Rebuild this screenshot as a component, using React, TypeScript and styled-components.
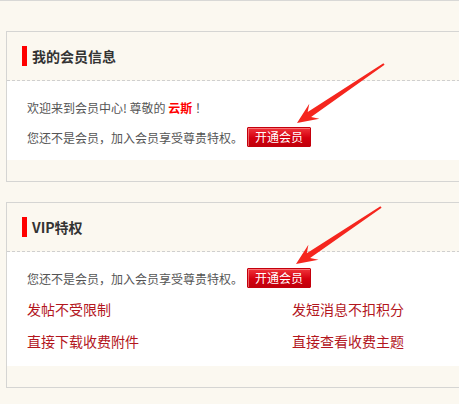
import React from 'react';
import styled, { createGlobalStyle } from 'styled-components';

const GlobalStyle = createGlobalStyle`
  html, body {
    margin: 0;
    padding: 0;
    background: #fbf8f0;
    overflow: hidden;
  }
  body {
    font-family: "Noto Sans CJK SC", "Noto Sans", sans-serif;
  }
`;

interface Point {
  x: number;
  y: number;
}

// builds a tapered arrow polygon from tail to tip
const arrowPoints = (tail: Point, tip: Point) => {
  const dx = tip.x - tail.x;
  const dy = tip.y - tail.y;
  const len = Math.hypot(dx, dy);
  const ux = dx / len;
  const uy = dy / len;
  const px = -uy;
  const py = ux;
  const at = (d: number, w: number) =>
    `${(tip.x - ux * d + px * w).toFixed(1)},${(tip.y - uy * d + py * w).toFixed(1)}`;
  return [
    at(len, 1),
    at(15, 3),
    at(21, 9),
    `${tip.x},${tip.y}`,
    at(21, -9),
    at(15, -3),
    at(len, -1),
  ].join(' ');
};

const privileges = [
  '发帖不受限制',
  '发短消息不扣积分',
  '直接下载收费附件',
  '直接查看收费主题',
];

const App = () => {
  return (
    <Page>
      <GlobalStyle />
      <Panel>
        <PanelHeader>
          <Title>我的会员信息</Title>
        </PanelHeader>
        <PanelBody>
          <Line>
            欢迎来到会员中心! 尊敬的 <UserName>云斯</UserName> ！
          </Line>
          <Line>
            您还不是会员，加入会员享受尊贵特权。
            <JoinButton type="button">开通会员</JoinButton>
          </Line>
        </PanelBody>
      </Panel>

      <Panel>
        <PanelHeader>
          <Title>VIP特权</Title>
        </PanelHeader>
        <PanelBody>
          <Line>
            您还不是会员，加入会员享受尊贵特权。
            <JoinButton type="button">开通会员</JoinButton>
          </Line>
          <PrivilegeGrid>
            {privileges.map((p) => (
              <Privilege key={p} href="#">
                {p}
              </Privilege>
            ))}
          </PrivilegeGrid>
        </PanelBody>
      </Panel>

      <ArrowLayer width="459" height="404" viewBox="0 0 459 404">
        <polygon points={arrowPoints({ x: 384, y: 63 }, { x: 297, y: 122 })} fill="#f5261e" />
        <polygon points={arrowPoints({ x: 381, y: 206 }, { x: 296, y: 263 })} fill="#f5261e" />
      </ArrowLayer>
    </Page>
  );
};

const Page = styled.div`
  position: relative;
  width: 459px;
  height: 404px;
  overflow: hidden;
  box-sizing: border-box;
  border-top: 1px solid #d8d8d6;
  padding: 30px 0 0 6px;
  display: flex;
  flex-direction: column;
  gap: 20px;
`;

const Panel = styled.section`
  width: calc(100% + 20px);
  border: 1px solid #d5d5d3;
  background: #fbf8f0;
  padding-bottom: 21px;
`;

const PanelHeader = styled.div`
  height: 48px;
  display: flex;
  align-items: center;
  padding-left: 15px;
  border-bottom: 1px dashed #cfcfcf;
`;

const Title = styled.h3`
  margin: 0;
  display: flex;
  align-items: center;
  gap: 5px;
  font-size: 14px;
  font-weight: bold;
  color: #333;
  line-height: 20px;

  &::before {
    content: '';
    width: 5px;
    height: 20px;
    background: #ff0000;
  }
`;

const PanelBody = styled.div`
  background: #fff;
  padding: 11px 20px 8px;
`;

const Line = styled.p`
  margin: 0;
  height: 30px;
  display: flex;
  align-items: center;
  font-size: 12px;
  color: #555;
  white-space: pre;
`;

const UserName = styled.strong`
  color: #ff0000;
  font-weight: bold;
`;

const JoinButton = styled.button`
  margin-left: 4px;
  width: 64px;
  height: 20px;
  padding: 0;
  border: 1px solid #c4000c;
  border-radius: 1px;
  background: linear-gradient(#f0343a, #d4000f 55%, #c0000b);
  box-shadow: inset 1px 1px 0 rgba(255, 160, 160, 0.6);
  color: #fff;
  font-family: inherit;
  font-size: 12px;
  line-height: 18px;
  cursor: pointer;
`;

const PrivilegeGrid = styled.div`
  display: grid;
  grid-template-columns: 265px 265px;
  grid-auto-rows: 32px;
  padding-bottom: 1px;
`;

const Privilege = styled.a`
  display: flex;
  align-items: center;
  font-size: 14px;
  color: #b3161d;
  text-decoration: none;
`;

const ArrowLayer = styled.svg`
  position: absolute;
  top: 0;
  left: 0;
  pointer-events: none;
`;

export default App;
